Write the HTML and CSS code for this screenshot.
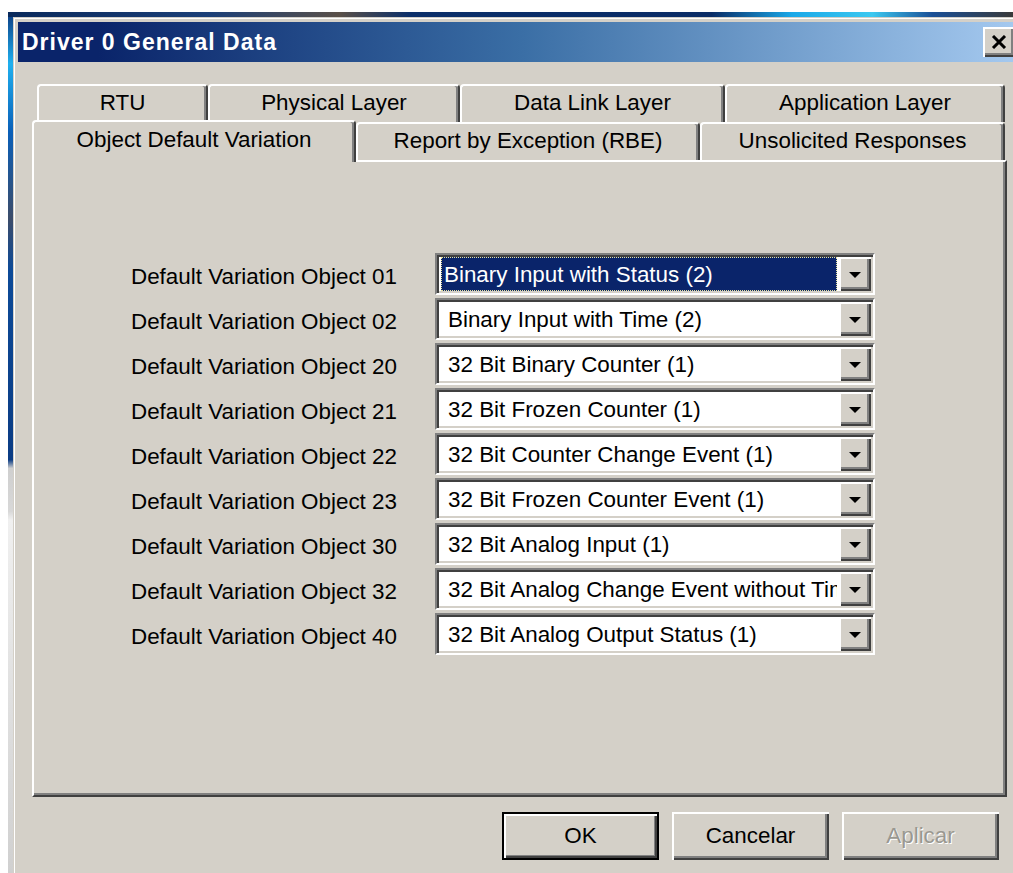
FILE: index.html
```html
<!DOCTYPE html>
<html lang="en">
<head>
<meta charset="utf-8">
<title>Driver 0 General Data</title>
<link rel="stylesheet" href="styles.css">
</head>
<body>
<div class="desktop">
  <div class="window">
    <div class="titlebar">
      <span class="title">Driver 0 General Data</span>
      <button class="close" type="button" aria-label="Close">
        <svg width="16" height="14" viewBox="0 0 16 14"><path d="M2 1 L14 13 M14 1 L2 13" stroke="#000" stroke-width="3" fill="none"/></svg>
      </button>
    </div>
    <div class="client">
      <div class="tabs">
        <div class="tab-row back">
          <div class="tab tab-rtu">RTU</div>
          <div class="tab tab-phys">Physical Layer</div>
          <div class="tab tab-link">Data Link Layer</div>
          <div class="tab tab-app">Application Layer</div>
        </div>
        <div class="tab-row front">
          <div class="tab tab-odv active">Object Default Variation</div>
          <div class="tab tab-rbe">Report by Exception (RBE)</div>
          <div class="tab tab-unsol">Unsolicited Responses</div>
        </div>
      </div>
      <div class="panel">
        <div class="form">
          <label class="label">Default Variation Object 01</label>
          <div class="combo focused"><span class="value">Binary Input with Status (2)</span><span class="drop"><span class="arrow"></span></span></div>
          <label class="label">Default Variation Object 02</label>
          <div class="combo"><span class="value">Binary Input with Time (2)</span><span class="drop"><span class="arrow"></span></span></div>
          <label class="label">Default Variation Object 20</label>
          <div class="combo"><span class="value">32 Bit Binary Counter (1)</span><span class="drop"><span class="arrow"></span></span></div>
          <label class="label">Default Variation Object 21</label>
          <div class="combo"><span class="value">32 Bit Frozen Counter (1)</span><span class="drop"><span class="arrow"></span></span></div>
          <label class="label">Default Variation Object 22</label>
          <div class="combo"><span class="value">32 Bit Counter Change Event (1)</span><span class="drop"><span class="arrow"></span></span></div>
          <label class="label">Default Variation Object 23</label>
          <div class="combo"><span class="value">32 Bit Frozen Counter Event (1)</span><span class="drop"><span class="arrow"></span></span></div>
          <label class="label">Default Variation Object 30</label>
          <div class="combo"><span class="value">32 Bit Analog Input (1)</span><span class="drop"><span class="arrow"></span></span></div>
          <label class="label">Default Variation Object 32</label>
          <div class="combo"><span class="value">32 Bit Analog Change Event without Time (1)</span><span class="drop"><span class="arrow"></span></span></div>
          <label class="label">Default Variation Object 40</label>
          <div class="combo"><span class="value">32 Bit Analog Output Status (1)</span><span class="drop"><span class="arrow"></span></span></div>
        </div>
      </div>
      <div class="buttons">
        <button class="btn default" type="button">OK</button>
        <button class="btn" type="button">Cancelar</button>
        <button class="btn disabled" type="button" disabled>Aplicar</button>
      </div>
    </div>
  </div>
</div>
</body>
</html>
```
FILE: styles.css
```css
html, body {
  margin: 0;
  padding: 0;
  background: #ffffff;
  overflow: hidden;
  width: 1013px;
  height: 873px;
}

body {
  font-family: "Liberation Sans", Arial, sans-serif;
  font-size: 22.4px;
  color: #000;
}

/* desktop wallpaper peeking out around the dialog */
.desktop {
  margin: 12px 0 0 8px;
  width: 1005px;
  height: 861px;
  padding: 5px 0 0 5px;
  box-sizing: border-box;
  overflow: hidden;
  background:
    linear-gradient(90deg, #0a2a5c 0, #1b3f78 20%, #5a5048 33%, #0b2f6a 40%, #0a2c66 70%, #1aa8e8 78%, #3cc8f0 86%, #1a4f96 92%, #3a3a3a 100%) top left / 100% 5px no-repeat,
    linear-gradient(180deg, #0c3b82 0, #1fb0ef 6%, #0a5fb8 14%, #3c4c6a 24%, #0c4a98 30%, #0b3c84 52%, #cfcfcf 53%, #d8d8d8 58%, #f0f0f0 59%, #d0d0d0 100%) top left / 5px 100% no-repeat,
    #d4d0c8;
}

.window {
  width: 1010px;
  height: 900px;
  background: #d4d0c8;
  padding: 5px 0 0 5px;
  box-sizing: border-box;
  box-shadow: inset 1px 1px 0 #d4d0c8, inset 2px 2px 0 #ffffff;
}

/* caption bar */
.titlebar {
  height: 40px;
  display: flex;
  align-items: center;
  justify-content: space-between;
  background: linear-gradient(90deg, #0a246a 0, #0a246a 8%, #3a6ea5 50%, #a6caf0 100%);
}

.title {
  padding-left: 4px;
  color: #ffffff;
  font-weight: bold;
  font-size: 23px;
  letter-spacing: 1px;
}

.close {
  width: 32px;
  height: 30px;
  margin-right: 8px;
  padding: 0;
  border: none;
  background: #d4d0c8;
  display: flex;
  align-items: center;
  justify-content: center;
  box-shadow: inset 2px 2px 0 #ffffff, inset -2px -2px 0 #404040, inset -4px -4px 0 #808080;
}

.client {
  padding: 22px 0 0 14px;
}

/* property sheet tabs */
.tabs {
  width: 975px;
}

.tab-row {
  display: flex;
  height: 38px;
}

.tab-row.back {
  padding-left: 5px;
}

.tab {
  box-sizing: border-box;
  height: 38px;
  display: flex;
  align-items: center;
  justify-content: center;
  background: #d4d0c8;
  border-top: 2px solid #ffffff;
  border-left: 2px solid #ffffff;
  border-right: 2px solid #404040;
  border-radius: 4px 4px 0 0;
  box-shadow: inset -2px 0 0 #808080;
  white-space: nowrap;
  padding-bottom: 2px;
}

.tab-rtu { width: 171px; }
.tab-phys { width: 252px; }
.tab-link { width: 265px; }
.tab-app { width: 280px; }

.tab-odv { width: 324px; }
.tab-rbe { width: 344px; }
.tab-unsol { width: 305px; }

.tab.active {
  position: relative;
  z-index: 1;
  height: 42px;
  margin-top: -2px;
  margin-bottom: -2px;
  align-items: flex-start;
  padding-top: 5px;
  border-right: 2px solid #404040;
}

/* tab page */
.panel {
  width: 975px;
  height: 637px;
  box-sizing: border-box;
  background: #d4d0c8;
  border-top: 2px solid #ffffff;
  border-left: 2px solid #ffffff;
  border-right: 2px solid #404040;
  border-bottom: 2px solid #404040;
  box-shadow: inset -2px -2px 0 #808080;
}

.form {
  display: grid;
  grid-template-columns: 304px 440px;
  grid-auto-rows: 42px;
  row-gap: 3px;
  padding: 91px 0 0 97px;
}

.label {
  display: flex;
  align-items: center;
  padding-top: 5px;
  white-space: nowrap;
}

/* drop-down list */
.combo {
  display: flex;
  box-sizing: border-box;
  background: #ffffff;
  border-top: 2px solid #808080;
  border-left: 2px solid #808080;
  border-bottom: 2px solid #ffffff;
  border-right: 2px solid #ffffff;
  box-shadow: inset 2px 2px 0 #404040, inset -2px -2px 0 #d4d0c8;
  padding: 2px;
}

.value {
  flex: 1;
  min-width: 0;
  overflow: hidden;
  white-space: nowrap;
  display: flex;
  align-items: center;
  padding: 2px 0 0 7px;
  margin: 0 2px 0 2px;
}

.combo.focused .value {
  background: #0a246a;
  color: #ffffff;
  outline: 1px dotted #e8e4a0;
  outline-offset: -1px;
  padding-left: 3px;
}

.drop {
  width: 32px;
  flex: none;
  background: #d4d0c8;
  display: flex;
  align-items: center;
  justify-content: center;
  box-shadow: inset 2px 2px 0 #ffffff, inset -2px -2px 0 #404040, inset -4px -4px 0 #808080;
}

.arrow {
  width: 0;
  height: 0;
  border-left: 6px solid transparent;
  border-right: 6px solid transparent;
  border-top: 6px solid #000000;
  margin: 1px 1px 0 0;
}

/* dialog buttons */
.buttons {
  width: 975px;
  display: flex;
  justify-content: flex-end;
  gap: 13px;
  padding: 15px 8px 0 0;
  box-sizing: border-box;
}

.btn {
  width: 157px;
  height: 48px;
  padding: 0;
  font-family: "Liberation Sans", Arial, sans-serif;
  font-size: 22.4px;
  color: #000;
  background: #d4d0c8;
  border: none;
  box-shadow: inset 2px 2px 0 #ffffff, inset -2px -2px 0 #404040, inset -4px -4px 0 #808080;
}

.btn.default {
  box-shadow: inset 0 0 0 2px #000000, inset 4px 4px 0 #ffffff, inset -4px -4px 0 #404040, inset -5px -5px 0 #808080;
}

.btn.disabled {
  color: #9a9890;
  text-shadow: 1px 1px 0 #ffffff;
}
```
